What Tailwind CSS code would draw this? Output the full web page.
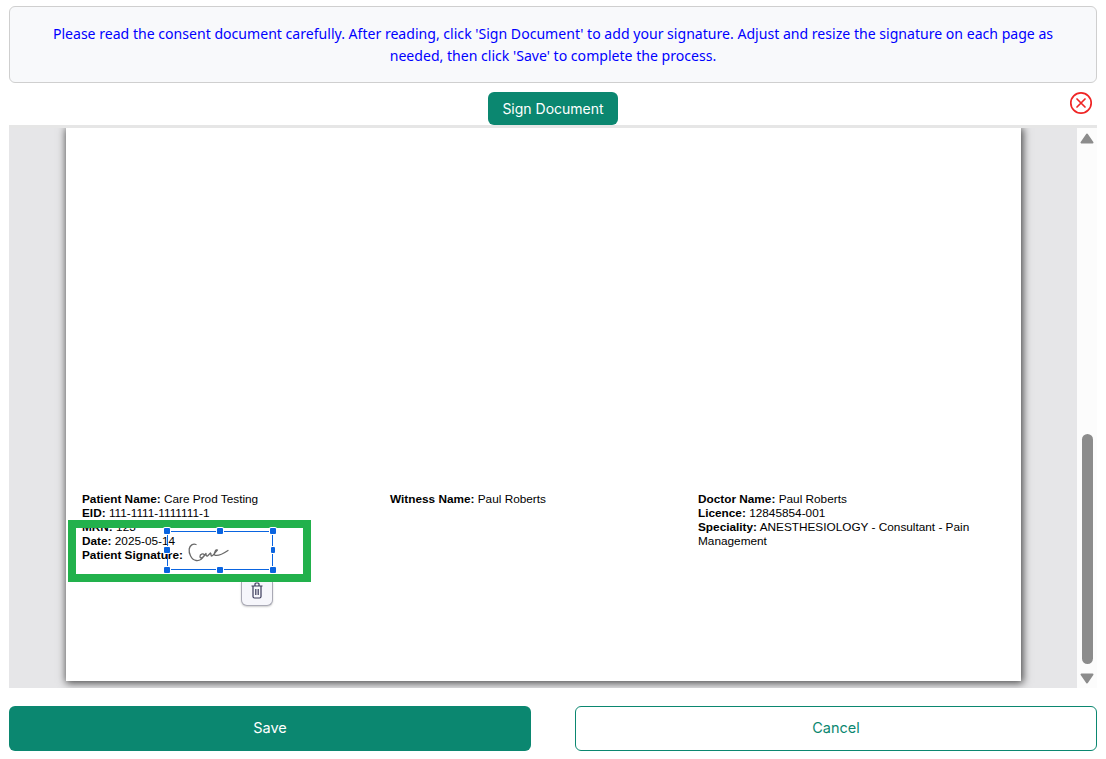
<!DOCTYPE html>
<html lang="en">
<head>
    <meta charset="UTF-8">
    <title>Consent Document</title>
    <script src="https://cdn.jsdelivr.net/npm/@tailwindcss/browser@4"></script>
</head>
<body class="bg-white h-[759px] overflow-hidden font-['Inter',sans-serif]">
    <div class="px-[9px] pt-[6px] flex flex-col">
        <!-- Instructions -->
        <div class="h-[77px] border border-[#cfcfcf] rounded-[6px] bg-[#f8f9fb] flex items-center justify-center px-[32px] text-center text-[14.08px] leading-[22px] text-[#0000ff] font-['Noto_Sans',sans-serif]">
            <p>Please read the consent document carefully. After reading, click 'Sign Document' to add your signature. Adjust and resize the signature on each page as needed, then click 'Save' to complete the process.</p>
        </div>

        <!-- Sign row -->
        <div class="relative flex justify-center mt-[9px] h-[33px]">
            <button class="w-[130px] h-[33px] pb-[1px] rounded-[6px] bg-[#0b8770] text-white text-[14px]">Sign Document</button>
            <svg class="absolute right-[4px] top-[-1px] w-[24px] h-[24px]" viewBox="0 0 24 24" fill="none" stroke="#ef2525" stroke-width="1.7" stroke-linecap="round">
                <circle cx="12" cy="12" r="10.2"/>
                <path d="M8 8l8 8M16 8l-8 8"/>
            </svg>
        </div>

        <!-- Document viewer -->
        <div class="h-[563px] bg-[#e6e6e8] border-t-[3px] border-[#e6e6e6] flex overflow-hidden">
            <div class="w-[1068px] pl-[57px] shrink-0">
                <div class="relative w-[955px] h-[553px] bg-white shadow-[1px_1px_8px_1px_rgba(0,0,0,0.7)] pl-[16px] pt-[364px] font-['Liberation_Sans',sans-serif] text-[11.8px] leading-[14px] text-black">
                    <div class="grid grid-cols-[308px_308px_292px]">
                        <div>
                            <p><b>Patient Name:</b> Care Prod Testing</p>
                            <p><b>EID:</b> 111-1111-1111111-1</p>
                            <p><b>MRN:</b> 123</p>
                            <p><b>Date:</b> 2025-05-14</p>
                            <p><b>Patient Signature:</b></p>
                        </div>
                        <div>
                            <p><b>Witness Name:</b> Paul Roberts</p>
                        </div>
                        <div>
                            <p><b>Doctor Name:</b> Paul Roberts</p>
                            <p><b>Licence:</b> 12845854-001</p>
                            <p><b>Speciality:</b> ANESTHESIOLOGY - Consultant - Pain Management</p>
                        </div>
                    </div>

                    <!-- Green highlight -->
                    <div class="absolute left-[2px] top-[392px] w-[243px] h-[62px] border-[8px] border-[#22b14c]"></div>

                    <!-- Signature box -->
                    <div class="absolute left-[101px] top-[403px] w-[106px] h-[39px] border border-[#0a64e0]">
                        <svg class="absolute left-[20px] top-[11px] w-[46px] h-[20px]" viewBox="0 0 46 20" fill="none" stroke="#6a6a6a" stroke-width="1.3" stroke-linecap="round" stroke-linejoin="round">
                            <path d="M8 1.500C5 .5 2 2 1.200 6c-.6 4 2 11 7 11.500 4 .5 7-3 8.300-5.500-1.500-2-4.500-1-4.500 1.500s2.500 1.500 4.500-1l1.500-2c0 2 .5 3 1.500 2.500l3-3c1 .5 0 3 1 3 2 0 3.500-4 6-6-1.500-1-3.500 2-3 5 3 1.500 9-1.500 13.500-4.500"/>
                        </svg>
                        <span class="absolute left-[-4px] top-[-4px] w-[6px] h-[6px] rounded-[1px] bg-[#0a64e0] ring-1 ring-white"></span>
                        <span class="absolute left-[49px] top-[-4px] w-[6px] h-[6px] rounded-[1px] bg-[#0a64e0] ring-1 ring-white"></span>
                        <span class="absolute right-[-4px] top-[-4px] w-[6px] h-[6px] rounded-[1px] bg-[#0a64e0] ring-1 ring-white"></span>
                        <span class="absolute left-[-4px] top-[15px] w-[6px] h-[6px] rounded-[1px] bg-[#0a64e0] ring-1 ring-white"></span>
                        <span class="absolute right-[-3px] top-[15px] w-[4px] h-[6px] rounded-[1px] bg-[#0a64e0] ring-1 ring-white"></span>
                        <span class="absolute left-[-4px] bottom-[-4px] w-[6px] h-[6px] rounded-[1px] bg-[#0a64e0] ring-1 ring-white"></span>
                        <span class="absolute left-[49px] bottom-[-4px] w-[6px] h-[6px] rounded-[1px] bg-[#0a64e0] ring-1 ring-white"></span>
                        <span class="absolute right-[-4px] bottom-[-4px] w-[6px] h-[6px] rounded-[1px] bg-[#0a64e0] ring-1 ring-white"></span>
                    </div>

                    <!-- Delete signature -->
                    <div class="absolute left-[175px] top-[454px] w-[32px] h-[24px] bg-[#f6f6fb] border border-t-0 border-[#a9a9b5] rounded-b-[6px] shadow-[0_1px_2px_rgba(0,0,0,0.2)] flex justify-center">
                        <svg class="w-[12px] h-[17px]" viewBox="0 0 12 17" fill="none" stroke="#3a3a5a" stroke-width="1.2">
                            <path d="M.5 4h11M4 4V2c0-.6.4-1 1-1h2c.6 0 1 .4 1 1v2M2 4v10.500c0 .8.7 1.500 1.500 1.500h5c.8 0 1.500-.7 1.500-1.500V4M4.800 7v6M7.200 7v6"/>
                        </svg>
                    </div>
                </div>
            </div>

            <!-- Scrollbar -->
            <div class="w-[20px] bg-[#fcfcfc] flex flex-col items-center">
                <svg class="mt-[5px] w-[14px] h-[11px]" viewBox="0 0 14 11" fill="#8c8c8c" stroke="#8c8c8c" stroke-width="2" stroke-linejoin="round">
                    <path d="M7 1.500L1.500 9.500h11z"/>
                </svg>
                <div class="mt-[290px] w-[11px] h-[230px] rounded-full bg-[#8c8c8c]"></div>
                <svg class="mt-[9px] w-[14px] h-[11px]" viewBox="0 0 14 11" fill="#8c8c8c" stroke="#8c8c8c" stroke-width="2" stroke-linejoin="round">
                    <path d="M7 9.500L1.500 1.500h11z"/>
                </svg>
            </div>
        </div>

        <!-- Actions -->
        <div class="grid grid-cols-2 gap-[44px] mt-[18px]">
            <button class="h-[45px] pb-[1px] rounded-[6px] bg-[#0b8770] text-white text-[14.5px]">Save</button>
            <button class="h-[45px] pb-[1px] rounded-[6px] border border-[#0b8770] bg-white text-[#0b8770] text-[14.5px]">Cancel</button>
        </div>
    </div>
</body>
</html>
